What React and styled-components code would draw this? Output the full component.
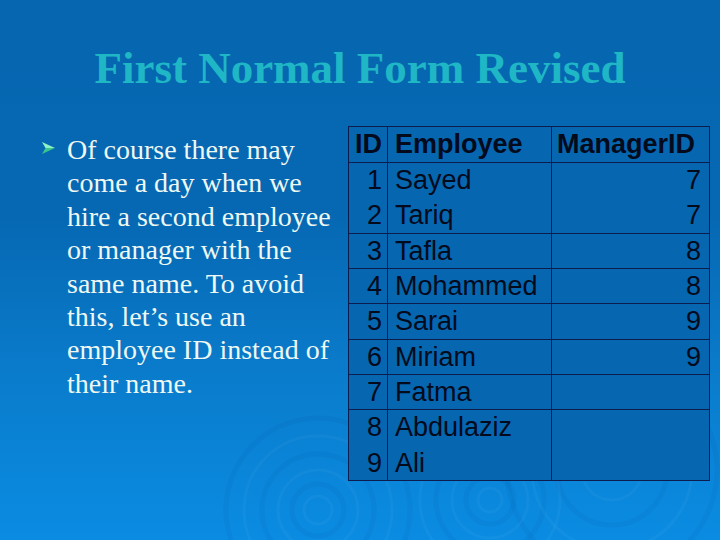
import React from "react";
import styled, { createGlobalStyle } from "styled-components";

const GlobalStyle = createGlobalStyle`
  html, body {
    margin: 0;
    padding: 0;
    background: #0666b0;
  }
  * {
    box-sizing: border-box;
  }
`;

const rows = [
  { id: 1, name: "Sayed", manager: 7, line: true },
  { id: 2, name: "Tariq", manager: 7, line: false },
  { id: 3, name: "Tafla", manager: 8, line: true },
  { id: 4, name: "Mohammed", manager: 8, line: true },
  { id: 5, name: "Sarai", manager: 9, line: true },
  { id: 6, name: "Miriam", manager: 9, line: true },
  { id: 7, name: "Fatma", manager: "", line: true },
  { id: 8, name: "Abdulaziz", manager: "", line: true },
  { id: 9, name: "Ali", manager: "", line: false },
];

const ripples = [
  { cx: 318, cy: 510, r: [14, 26, 40, 56, 74, 92] },
  { cx: 490, cy: 500, r: [12, 24, 38, 54, 70] },
  { cx: 612, cy: 470, r: [30, 55, 80, 105] },
];

const Slide = styled.div`
  position: relative;
  width: 720px;
  height: 540px;
  overflow: hidden;
  background: linear-gradient(
    180deg,
    #0666b0 0%,
    #0668b3 40%,
    #0a7ccc 70%,
    #0a8ce2 100%
  );
`;

const Ripples = styled.svg`
  position: absolute;
  left: 0;
  top: 0;
  z-index: 0;
`;

const Inner = styled.div`
  position: relative;
  z-index: 1;
  display: flex;
  flex-direction: column;
`;

const Title = styled.h1`
  margin: 46px 0 0;
  height: 45px;
  font-family: "Liberation Serif", "Times New Roman", serif;
  font-weight: bold;
  font-size: 45px;
  line-height: 45px;
  color: #1fb6c6;
  text-align: center;
`;

const Content = styled.div`
  display: flex;
  align-items: flex-start;
  margin-top: 35px;
  padding-left: 42px;
`;

const TextColumn = styled.div`
  display: flex;
  align-items: flex-start;
  gap: 12px;
  width: 306px;
  padding-top: 7px;
`;

const Bullet = styled.svg`
  flex: none;
  margin-top: 9px;
`;

const Paragraph = styled.p`
  margin: 0;
  font-family: "Liberation Serif", "Times New Roman", serif;
  font-size: 28px;
  line-height: 33.4px;
  color: #eef8f2;
  white-space: nowrap;
`;

const Table = styled.div`
  width: 362px;
  border: 1px solid #0c1c4c;
  background: #0666b0;
  font-family: "Liberation Sans", Arial, sans-serif;
  font-size: 27px;
  color: #020a1c;
`;

const Row = styled.div`
  display: grid;
  grid-template-columns: 38px 164px 158px;
  height: ${(p) => (p.$head ? "35px" : "35.33px")};
  line-height: ${(p) => (p.$head ? "35px" : "34.33px")};
  box-shadow: ${(p) => (p.$line ? "inset 0 1px 0 #0c1c4c" : "none")};
  font-weight: ${(p) => (p.$head ? "bold" : "normal")};
`;

const Cell = styled.div`
  white-space: nowrap;
  text-align: ${(p) => p.$align || "left"};
  padding: ${(p) => p.$pad || "0 0 0 7px"};
  padding-top: ${(p) => (p.$head ? "0" : "1px")};
  border-left: ${(p) => (p.$first ? "none" : "1px solid #0c1c4c")};
`;

const ArrowBullet = () => (
  <Bullet width="13" height="12" viewBox="0 0 13 12">
    <polygon points="0,0 13,6 3.5,6" fill="#8ef2c4" />
    <polygon points="0,12 13,6 3.5,6" fill="#3cc48e" />
  </Bullet>
);

const App = () => {
  return (
    <>
      <GlobalStyle />
      <Slide>
        <Ripples width="720" height="540" viewBox="0 0 720 540">
          {ripples.map((g, i) =>
            g.r.map((r, j) => (
              <circle
                key={i + "-" + j}
                cx={g.cx}
                cy={g.cy}
                r={r}
                fill="none"
                stroke={j % 2 ? "rgba(0,40,120,0.05)" : "rgba(255,255,255,0.035)"}
                strokeWidth={j % 2 ? 5 : 3}
              />
            ))
          )}
        </Ripples>
        <Inner>
          <Title>First Normal Form Revised</Title>
          <Content>
            <TextColumn>
              <ArrowBullet />
              <Paragraph>
                Of course there may
                <br />
                come a day when we
                <br />
                hire a second employee
                <br />
                or manager with the
                <br />
                same name. To avoid
                <br />
                this, let’s use an
                <br />
                employee ID instead of
                <br />
                their name.
              </Paragraph>
            </TextColumn>
            <Table>
              <Row $head>
                <Cell $head $first $align="right" $pad="0 5px 0 0">
                  ID
                </Cell>
                <Cell $head>Employee</Cell>
                <Cell $head $pad="0 0 0 5px">
                  ManagerID
                </Cell>
              </Row>
              {rows.map((r) => (
                <Row key={r.id} $line={r.line}>
                  <Cell $first $align="right" $pad="0 5px 0 0">
                    {r.id}
                  </Cell>
                  <Cell>{r.name}</Cell>
                  <Cell $align="right" $pad="0 8px 0 0">
                    {r.manager}
                  </Cell>
                </Row>
              ))}
            </Table>
          </Content>
        </Inner>
      </Slide>
    </>
  );
};

export default App;
